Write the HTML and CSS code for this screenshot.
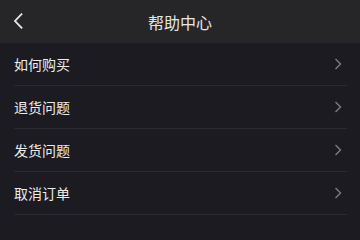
FILE: index.html
```html
<!DOCTYPE html>
<html lang="zh">
<head>
<meta charset="utf-8">
<link rel="stylesheet" href="styles.css">
</head>
<body>
<div class="page">
  <header class="bar">
    <span class="back">
      <svg width="10" height="16" viewBox="0 0 10 16"><path d="M8.5 1.2 L2 8 L8.5 14.8" fill="none" stroke="#e8e8e8" stroke-width="1.8" stroke-linecap="square"/></svg>
    </span>
    <h1 class="title">帮助中心</h1>
  </header>
  <ul class="list">
    <li class="row"><span class="label">如何购买</span><svg class="chev" width="8" height="12" viewBox="0 0 8 12"><path d="M1.5 1 L6.5 6 L1.5 11" fill="none" stroke="#7c7c80" stroke-width="1.4"/></svg></li>
    <li class="row"><span class="label">退货问题</span><svg class="chev" width="8" height="12" viewBox="0 0 8 12"><path d="M1.5 1 L6.5 6 L1.5 11" fill="none" stroke="#7c7c80" stroke-width="1.4"/></svg></li>
    <li class="row"><span class="label">发货问题</span><svg class="chev" width="8" height="12" viewBox="0 0 8 12"><path d="M1.5 1 L6.5 6 L1.5 11" fill="none" stroke="#7c7c80" stroke-width="1.4"/></svg></li>
    <li class="row"><span class="label">取消订单</span><svg class="chev" width="8" height="12" viewBox="0 0 8 12"><path d="M1.5 1 L6.5 6 L1.5 11" fill="none" stroke="#7c7c80" stroke-width="1.4"/></svg></li>
  </ul>
</div>
</body>
</html>
```
FILE: styles.css
```css
html, body {
  margin: 0;
  padding: 0;
  background: #1b1b21;
}
body {
  font-family: "Noto Sans CJK SC", "Noto Sans", sans-serif;
  color: #e8e8e8;
}
.page {
  width: 360px;
  height: 218px;
  overflow: hidden;
}
.bar {
  height: 43px;
  background: #262629;
  display: flex;
  align-items: center;
  justify-content: center;
  position: relative;
}
.back {
  position: absolute;
  left: 13px;
  top: 13px;
  width: 10px;
  height: 16px;
  display: flex;
}
.title {
  margin: 0;
  font-size: 16px;
  font-weight: 400;
  line-height: 1;
  color: #e6e6e6;
}
.list {
  list-style: none;
  margin: 0;
  padding: 0;
}
.row {
  height: 42px;
  margin: 0 13px 0 14px;
  border-bottom: 1px solid #2a2a30;
  display: flex;
  align-items: center;
  justify-content: space-between;
}
.label {
  font-size: 14px;
  line-height: 1;
  color: #ececec;
}
.chev {
  margin-right: 5px;
}
```
